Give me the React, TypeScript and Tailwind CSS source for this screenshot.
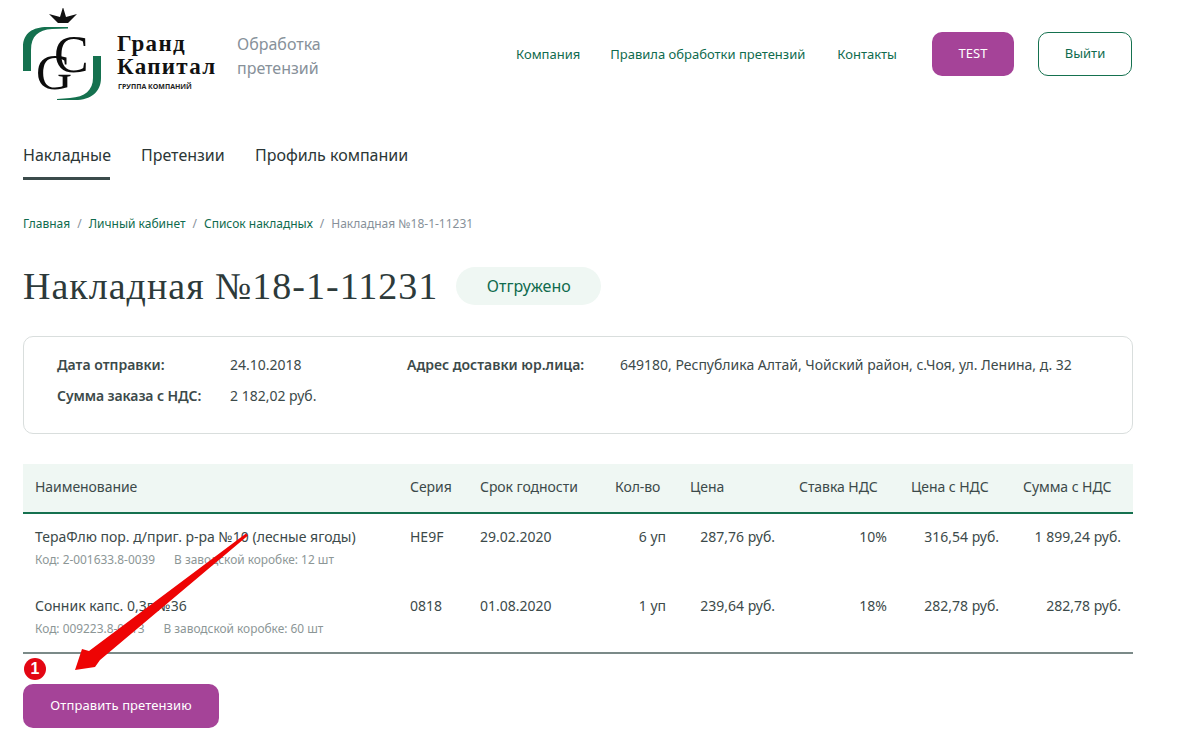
import React from "react";

const cols = "grid grid-cols-[375px_70px_135px_75px_109px_112px_112px_122px]";
const headers = ["Наименование", "Серия", "Срок годности", "Кол-во", "Цена", "Ставка НДС", "Цена с НДС", "Сумма с НДС"];
const rows = [
  { name: "ТераФлю пор. д/приг. р-ра №10 (лесные ягоды)", code: "Код: 2-001633.8-0039", box: "В заводской коробке: 12 шт", s: "HE9F", d: "29.02.2020", q: "6 уп", p: "287,76 руб.", v: "10%", pv: "316,54 руб.", t: "1 899,24 руб." },
  { name: "Сонник капс. 0,3г №36", code: "Код: 009223.8-0013", box: "В заводской коробке: 60 шт", s: "0818", d: "01.08.2020", q: "1 уп", p: "239,64 руб.", v: "18%", pv: "282,78 руб.", t: "282,78 руб." },
];

function Logo() {
  return (
    <div className="relative w-[200px] h-[94px] shrink-0">
      <svg className="absolute left-0 top-0" width="84" height="94" viewBox="23 8 84 94">
        <path d="M63 7 L66 17 L77 14 L68 23 L58 23 L49 14 L60 17 Z" fill="#111" />
        <path d="M23 71 V47 C23 33 33 27 47 27 L68 27 V28.500 L52 29 C38 30 31 36 31 50 V71 Z" fill="#15714f" />
        <path d="M101 56 V78 C101 92 91 100 75 100 L57 100 V99 L70 98 C85 97 93 90 93 78 V56 Z" fill="#15714f" />
        <text x="36" y="89" fontSize="50" fill="#0c0c0c" fontFamily="'Liberation Serif', serif">G</text>
        <text x="54" y="72" fontSize="52" fill="#0c0c0c" fontFamily="'Liberation Serif', serif">C</text>
      </svg>
      <div className="absolute left-[94px] top-[24px] text-[#111] font-['Liberation_Serif',serif] font-bold text-[23px] leading-[23px] tracking-[1.3px] whitespace-nowrap">
        <div>Гранд</div>
        <div>Капитал</div>
      </div>
      <div className="absolute left-[95px] top-[74px] text-[7px] leading-[9px] font-bold text-[#222] font-['Open_Sans',sans-serif] whitespace-nowrap">ГРУППА КОМПАНИЙ</div>
    </div>
  );
}

function Arrow() {
  return (
    <svg className="absolute left-[60px] top-[528px] pointer-events-none" width="200" height="156" viewBox="60 528 200 156">
      <path d="M246 533.500 L89 651 L82 649 L75 670 L95 667 L100 660 L248 535.500 Z" fill="#ee0404" />
    </svg>
  );
}

export default function App() {
  return (
    <div className="relative w-[1181px] h-[745px] overflow-hidden bg-white font-['Noto_Sans','Open_Sans',sans-serif] text-[#3c4a4a]">
      <div className="ml-[23px] w-[1110px]">
        <header className="flex items-start h-[102px] pt-[8px]">
          <Logo />
          <div className="ml-[14px] mt-[24px] text-[16px] leading-[24px] text-[#87919a] w-[100px]">Обработка претензий</div>
          <nav className="ml-auto flex items-start pt-[24px] text-[13px] text-[#0f6b4e]">
            <a className="leading-[44px]">Компания</a>
            <a className="ml-[30px] leading-[44px]">Правила обработки претензий</a>
            <a className="ml-[32px] leading-[44px]">Контакты</a>
            <button className="ml-[35px] w-[82px] h-[44px] rounded-[10px] bg-[#a54398] text-white text-[13px]">TEST</button>
            <button className="ml-[24px] w-[94px] h-[44px] rounded-[10px] border border-[#15714f] text-[#0f6b4e] text-[13px]">Выйти</button>
            <span className="w-px" />
          </nav>
        </header>

        <div className="flex mt-[41px] h-[37px] text-[16px] leading-[24px] text-[#2b3636]">
          <div className="h-[37px] w-[87px] whitespace-nowrap border-b-[3px] border-[#3b4b4b]">Накладные</div>
          <div className="ml-[31px] w-[84px]">Претензии</div>
          <div className="ml-[30px]">Профиль компании</div>
        </div>

        <div className="flex gap-[7px] mt-[36px] text-[12px] leading-[16px] text-[#0f6b4e]">
          <span>Главная</span>
          <span className="text-[#87919a]">/</span>
          <span>Личный кабинет</span>
          <span className="text-[#87919a]">/</span>
          <span>Список накладных</span>
          <span className="text-[#87919a]">/</span>
          <span className="text-[#87919a]">Накладная №18-1-11231</span>
        </div>

        <div className="flex items-center mt-[35px] h-[38px]">
          <h1 className="text-[38px] leading-[38px] tracking-[1px] text-[#2d3a3a] font-['Liberation_Serif',serif] whitespace-nowrap">Накладная №18-1-11231</h1>
          <div className="ml-[18px] w-[145px] h-[38px] rounded-[19px] bg-[#eff7f3] flex items-center justify-center text-[16px] text-[#0f6b4e]">Отгружено</div>
        </div>

        <div className="mt-[31px] h-[98px] rounded-[10px] border border-[#d9dedd] pl-[33px] pt-[17px] text-[14px] leading-[22px] flex">
          <div className="grid grid-cols-[173px_177px] grid-rows-[22px_22px] gap-y-[9px] h-[53px]">
            <b className="font-semibold whitespace-nowrap">Дата отправки:</b>
            <span>24.10.2018</span>
            <b className="font-semibold whitespace-nowrap tracking-[-0.1px]">Сумма заказа с НДС:</b>
            <span>2 182,02 руб.</span>
          </div>
          <b className="font-semibold w-[213px]">Адрес доставки юр.лица:</b>
          <span>649180, Республика Алтай, Чойский район, с.Чоя, ул. Ленина, д. 32</span>
        </div>

        <div className="mt-[30px] text-[14px]">
          <div className={`${cols} h-[50px] pb-[3px] bg-[#eff7f3] border-b-2 border-[#15714f] items-center tracking-[-0.06px]`}>
            {headers.map((h) => (
              <div key={h} className="pl-[12px] whitespace-nowrap">{h}</div>
            ))}
          </div>
          {rows.map((r) => (
            <div key={r.s} className={`${cols} h-[69px] pt-[12px] leading-[22px]`}>
              <div className="pl-[12px] whitespace-nowrap">
                <div>{r.name}</div>
                <div className="mt-[1px] flex gap-[19px] text-[11.900px] leading-[20px] text-[#8c9696]">
                  <span>{r.code}</span>
                  <span>{r.box}</span>
                </div>
              </div>
              <div className="pl-[12px]">{r.s}</div>
              <div className="pl-[12px]">{r.d}</div>
              <div className="pr-[12px] text-right">{r.q}</div>
              <div className="pr-[12px] text-right">{r.p}</div>
              <div className="pr-[12px] text-right">{r.v}</div>
              <div className="pr-[12px] text-right">{r.pv}</div>
              <div className="pr-[12px] text-right">{r.t}</div>
            </div>
          ))}
          <div className="border-t-2 border-[#7b8a88]" />
        </div>

        <button className="mt-[30px] block w-[196px] h-[44px] rounded-[10px] bg-[#a54398] text-white text-[13px] tracking-[0.1px]">Отправить претензию</button>
      </div>

      <Arrow />
      <div className="absolute left-[24px] top-[658px] w-[22px] h-[22px] rounded-full bg-[#e30613] text-white text-[16px] leading-[22px] font-bold text-center font-['Liberation_Sans',sans-serif]">1</div>
    </div>
  );
}
